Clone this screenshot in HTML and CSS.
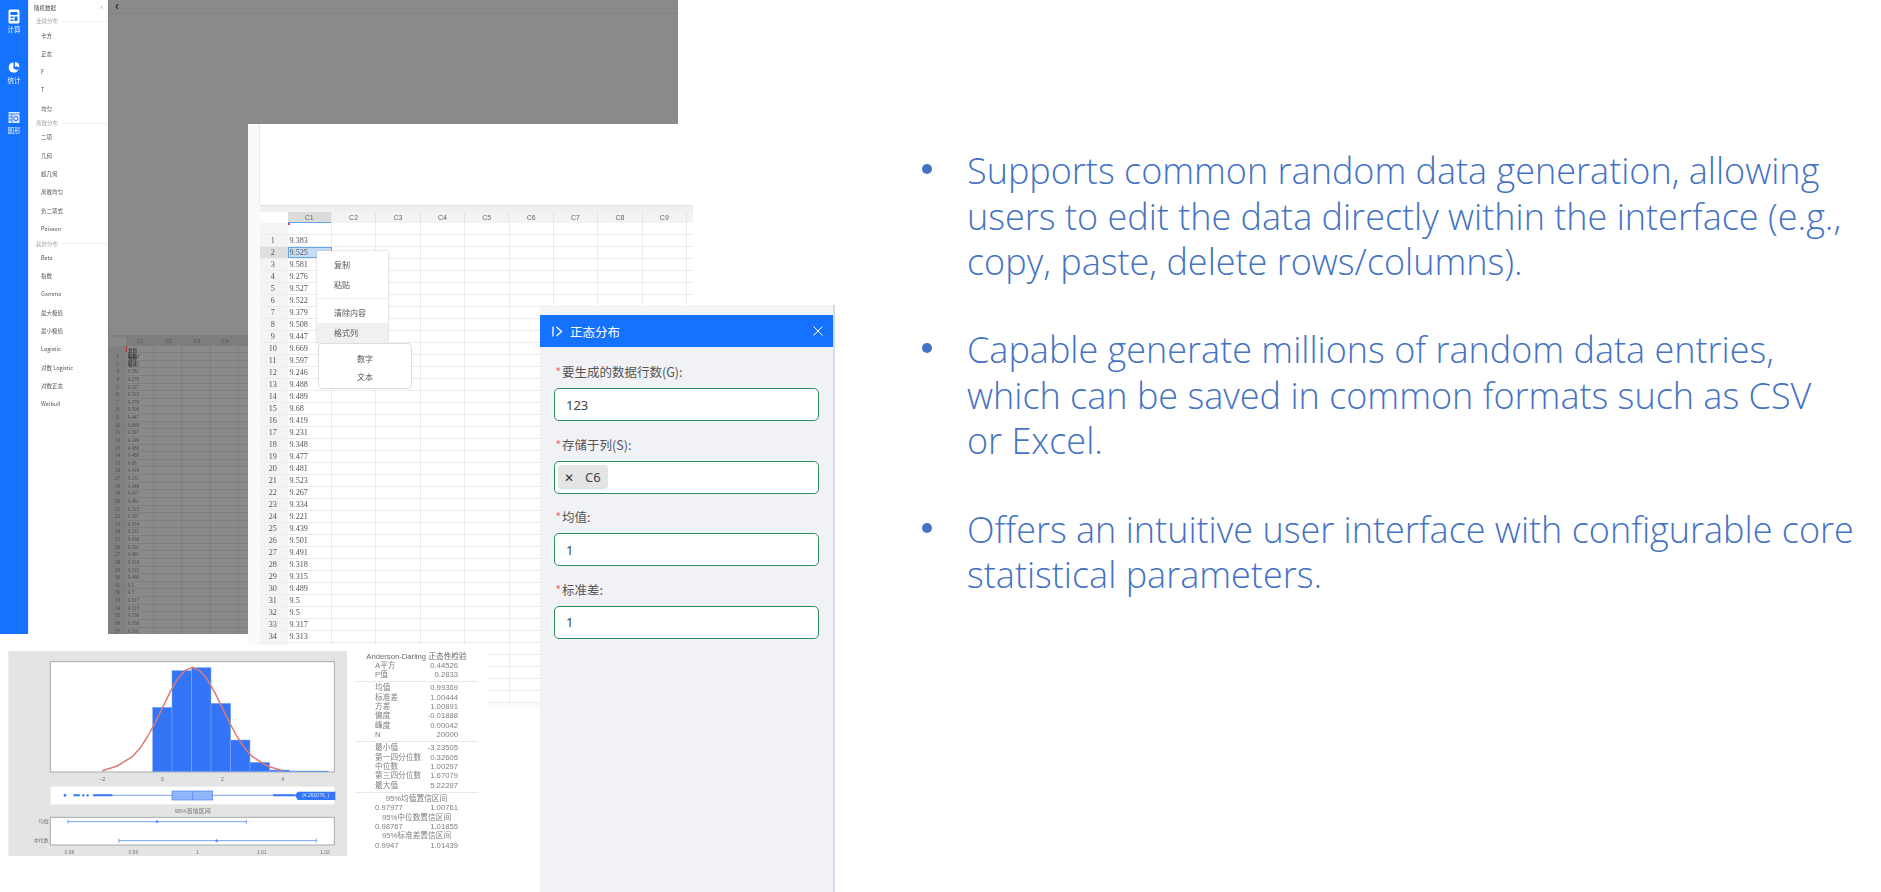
FILE: index.html
```html
<!DOCTYPE html>
<html lang="zh">
<head>
  <meta charset="UTF-8">
  <title>Random data</title>
  <link rel="stylesheet" href="styles.css">
</head>
<body>
<div class="slide">

  <!-- back window: app with the dimmed sheet -->
  <div class="app">
    <div class="rail">
      <div class="rail-item">
        <svg width="12" height="15" viewBox="0 0 12 15"><rect width="11" height="14" x=".5" y=".5" rx="1.5" fill="#fff"/><rect x="2.5" y="3" width="7" height="3" fill="#1472ff"/><rect x="2.5" y="7.5" width="3" height="1.5" fill="#1472ff"/><rect x="6.5" y="7.5" width="3" height="4.5" fill="#1472ff"/><rect x="2.5" y="10.5" width="3" height="1.5" fill="#1472ff"/></svg>
        <span>计算</span>
      </div>
      <div class="rail-item">
        <svg width="12" height="15" viewBox="0 -1.500 12 15"><path d="M5.5 1a5 5 0 1 0 5 6.4H5.500z" fill="#fff"/><path d="M7 .6a5 5 0 0 1 4.400 5.200H7z" fill="#fff"/><circle cx="8.600" cy="6.600" r="1.800" fill="#1472ff"/></svg>
        <span>统计</span>
      </div>
      <div class="rail-item">
        <svg width="12" height="15" viewBox="0 -1.500 12 15"><rect width="11" height="11" x=".5" y=".5" fill="#dce9ff"/><path d="M0 2.500h12M4 2.500v9M.5 5.500H4M.5 8.500H4" stroke="#1472ff" stroke-width=".8" fill="none"/><circle cx="7.800" cy="7" r="2.200" fill="none" stroke="#1472ff"/></svg>
        <span>图形</span>
      </div>
    </div>

    <div class="menu">
      <div class="menu-head"><span>随机数据</span><span class="chev">^</span></div>
      <div class="menu-group">连续分布</div>
      <div class="menu-item">卡方</div>
      <div class="menu-item">正态</div>
      <div class="menu-item">F</div>
      <div class="menu-item">T</div>
      <div class="menu-item">均匀</div>
      <div class="menu-group">离散分布</div>
      <div class="menu-item">二项</div>
      <div class="menu-item">几何</div>
      <div class="menu-item">超几何</div>
      <div class="menu-item">离散均匀</div>
      <div class="menu-item">负二项式</div>
      <div class="menu-item">Poisson</div>
      <div class="menu-group">其他分布</div>
      <div class="menu-item">Beta</div>
      <div class="menu-item">指数</div>
      <div class="menu-item">Gamma</div>
      <div class="menu-item">最大极值</div>
      <div class="menu-item">最小极值</div>
      <div class="menu-item">Logistic</div>
      <div class="menu-item">对数 Logistic</div>
      <div class="menu-item">对数正态</div>
      <div class="menu-item">Weibull</div>
    </div>

    <div class="dim">
      <div class="dim-top"><span class="back">‹</span></div>
      <div class="dim-space"></div>
      <div class="mini-head"><span class="mini-num"></span><span>C1</span><span>C2</span><span>C3</span><span>C4</span></div>
      <div class="mini-row mini-blank"><b></b><span></span></div>
      <div class="mini-row"><b>1</b><span>9.383</span></div>
      <div class="mini-row"><b>2</b><span>9.525</span></div>
      <div class="mini-row"><b>3</b><span>9.581</span></div>
      <div class="mini-row"><b>4</b><span>9.276</span></div>
      <div class="mini-row"><b>5</b><span>9.527</span></div>
      <div class="mini-row"><b>6</b><span>9.522</span></div>
      <div class="mini-row"><b>7</b><span>9.379</span></div>
      <div class="mini-row"><b>8</b><span>9.508</span></div>
      <div class="mini-row"><b>9</b><span>9.447</span></div>
      <div class="mini-row"><b>10</b><span>9.669</span></div>
      <div class="mini-row"><b>11</b><span>9.597</span></div>
      <div class="mini-row"><b>12</b><span>9.246</span></div>
      <div class="mini-row"><b>13</b><span>9.488</span></div>
      <div class="mini-row"><b>14</b><span>9.489</span></div>
      <div class="mini-row"><b>15</b><span>9.68</span></div>
      <div class="mini-row"><b>16</b><span>9.419</span></div>
      <div class="mini-row"><b>17</b><span>9.231</span></div>
      <div class="mini-row"><b>18</b><span>9.348</span></div>
      <div class="mini-row"><b>19</b><span>9.477</span></div>
      <div class="mini-row"><b>20</b><span>9.481</span></div>
      <div class="mini-row"><b>21</b><span>9.523</span></div>
      <div class="mini-row"><b>22</b><span>9.267</span></div>
      <div class="mini-row"><b>23</b><span>9.334</span></div>
      <div class="mini-row"><b>24</b><span>9.221</span></div>
      <div class="mini-row"><b>25</b><span>9.439</span></div>
      <div class="mini-row"><b>26</b><span>9.501</span></div>
      <div class="mini-row"><b>27</b><span>9.491</span></div>
      <div class="mini-row"><b>28</b><span>9.318</span></div>
      <div class="mini-row"><b>29</b><span>9.315</span></div>
      <div class="mini-row"><b>30</b><span>9.489</span></div>
      <div class="mini-row"><b>31</b><span>9.5</span></div>
      <div class="mini-row"><b>32</b><span>9.5</span></div>
      <div class="mini-row"><b>33</b><span>9.317</span></div>
      <div class="mini-row"><b>34</b><span>9.313</span></div>
      <div class="mini-row"><b>35</b><span>9.539</span></div>
      <div class="mini-row"><b>36</b><span>9.358</span></div>
      <div class="mini-row"><b>37</b><span>9.501</span></div>
      <div class="mini-menu">复制<br>粘贴<br>清除<br>格式</div>
    </div>
  </div>

  <!-- spreadsheet window -->
  <div class="sheet">
    <div class="sheet-blank"></div>
    <div class="sheet-band"></div>
    <div class="sheet-head">
      <span class="corner"></span>
      <span class="col col-on">C1</span><span class="col">C2</span><span class="col">C3</span><span class="col">C4</span><span class="col">C5</span><span class="col">C6</span><span class="col">C7</span><span class="col">C8</span><span class="col">C9</span><span class="col"></span>
    </div>
    <div class="row row-blank"><b class="num"></b><span class="val"></span></div>
    <div class="row"><b class="num">1</b><span class="val">9.383</span></div>
    <div class="row row-on"><b class="num">2</b><span class="val">9.525</span></div>
    <div class="row"><b class="num">3</b><span class="val">9.581</span></div>
    <div class="row"><b class="num">4</b><span class="val">9.276</span></div>
    <div class="row"><b class="num">5</b><span class="val">9.527</span></div>
    <div class="row"><b class="num">6</b><span class="val">9.522</span></div>
    <div class="row"><b class="num">7</b><span class="val">9.379</span></div>
    <div class="row"><b class="num">8</b><span class="val">9.508</span></div>
    <div class="row"><b class="num">9</b><span class="val">9.447</span></div>
    <div class="row"><b class="num">10</b><span class="val">9.669</span></div>
    <div class="row"><b class="num">11</b><span class="val">9.597</span></div>
    <div class="row"><b class="num">12</b><span class="val">9.246</span></div>
    <div class="row"><b class="num">13</b><span class="val">9.488</span></div>
    <div class="row"><b class="num">14</b><span class="val">9.489</span></div>
    <div class="row"><b class="num">15</b><span class="val">9.68</span></div>
    <div class="row"><b class="num">16</b><span class="val">9.419</span></div>
    <div class="row"><b class="num">17</b><span class="val">9.231</span></div>
    <div class="row"><b class="num">18</b><span class="val">9.348</span></div>
    <div class="row"><b class="num">19</b><span class="val">9.477</span></div>
    <div class="row"><b class="num">20</b><span class="val">9.481</span></div>
    <div class="row"><b class="num">21</b><span class="val">9.523</span></div>
    <div class="row"><b class="num">22</b><span class="val">9.267</span></div>
    <div class="row"><b class="num">23</b><span class="val">9.334</span></div>
    <div class="row"><b class="num">24</b><span class="val">9.221</span></div>
    <div class="row"><b class="num">25</b><span class="val">9.439</span></div>
    <div class="row"><b class="num">26</b><span class="val">9.501</span></div>
    <div class="row"><b class="num">27</b><span class="val">9.491</span></div>
    <div class="row"><b class="num">28</b><span class="val">9.318</span></div>
    <div class="row"><b class="num">29</b><span class="val">9.315</span></div>
    <div class="row"><b class="num">30</b><span class="val">9.489</span></div>
    <div class="row"><b class="num">31</b><span class="val">9.5</span></div>
    <div class="row"><b class="num">32</b><span class="val">9.5</span></div>
    <div class="row"><b class="num">33</b><span class="val">9.317</span></div>
    <div class="row"><b class="num">34</b><span class="val">9.313</span></div>
    <div class="row"><b class="num"></b><span class="val"></span></div>
    <div class="row"><b class="num"></b><span class="val"></span></div>
    <div class="row"><b class="num"></b><span class="val"></span></div>
    <div class="row"><b class="num"></b><span class="val"></span></div>
    <div class="row"><b class="num"></b><span class="val"></span></div>

    <div class="ctx">
      <div class="ctx-item">复制</div>
      <div class="ctx-item">粘贴</div>
      <div class="ctx-line"></div>
      <div class="ctx-item">清除内容</div>
      <div class="ctx-item ctx-on">格式列</div>
    </div>
    <div class="ctx-sub">
      <div>数字</div>
      <div>文本</div>
    </div>
  </div>

  <!-- report picture: chart and stats -->
  <div class="report">
    <svg class="chart" width="355" height="247" viewBox="0 15 1065 741" font-family="'Liberation Sans','Noto Sans CJK SC',sans-serif">
      <rect x="25" y="33" width="1016" height="615" fill="#e4e4e4"/>
      <rect x="151" y="65" width="852" height="331" fill="#fff" stroke="#a9a9a9" stroke-width="3"/>
      <g fill="#3375f6" stroke="#7ea6f8" stroke-width="1.5">
        <rect x="458" y="202" width="58" height="193"/>
        <rect x="516" y="92" width="59" height="303"/>
        <rect x="575" y="83" width="58" height="312"/>
        <rect x="633" y="190" width="59" height="205"/>
        <rect x="692" y="300" width="58" height="95"/>
        <rect x="750" y="367" width="59" height="28"/>
        <rect x="809" y="390" width="59" height="5"/>
        <rect x="868" y="393" width="117" height="2"/>
      </g>
      <polyline fill="none" stroke="#dd7a70" stroke-width="4.500" stroke-linejoin="round" points="307,392 352,378 397,350 419.500,325 442,291 464.500,250 487,204 509.500,158 532,118 554.500,92 577,82 599.500,92 622,118 644.500,158 667,204 689.500,250 712,291 734.500,325 757,350 802,378 847,392"/>
      <g fill="#666" font-size="15" text-anchor="middle">
        <text x="307" y="422">−2</text><text x="487" y="422">0</text><text x="667" y="422">2</text><text x="848" y="422">4</text>
      </g>
      <rect x="152" y="440" width="850" height="53" fill="#fff"/>
      <path d="M337 466H516M638 466H818" stroke="#5d8ff5" stroke-width="2.500"/>
      <rect x="516" y="453" width="122" height="27" fill="#90b5fa" stroke="#4b83f3" stroke-width="2"/>
      <path d="M578 453v27" stroke="#4b83f3" stroke-width="2"/>
      <g fill="#3375f6">
        <circle cx="195" cy="466" r="4"/><rect x="220" y="463" width="20" height="6" rx="3"/><circle cx="250" cy="466" r="3.500"/><circle cx="263" cy="466" r="3.500"/>
        <rect x="278" y="463" width="60" height="6" rx="3"/><rect x="818" y="463" width="68" height="6" rx="3"/>
      </g>
      <path d="M885 466l8-11h113v25H893z" fill="#3375f6"/>
      <text x="947" y="472" fill="#dbe7ff" font-size="15" text-anchor="middle">(4.261076, )</text>
      <text x="578" y="520" fill="#777" font-size="18" text-anchor="middle">95%置信区间</text>
      <rect x="151" y="532" width="852" height="83" fill="#fff" stroke="#a9a9a9" stroke-width="3"/>
      <g stroke="#5d8ff5" stroke-width="2.500" fill="#3375f6">
        <path d="M204 545H739M204 539v12M739 539v12M357 602H949M357 596v12M949 596v12"/>
        <circle cx="471" cy="545" r="3"/><circle cx="650" cy="602" r="3"/>
      </g>
      <g fill="#777" font-size="15">
        <text x="146" y="550" text-anchor="end">均值</text>
        <text x="146" y="607" text-anchor="end">中位数</text>
      </g>
      <g fill="#777" font-size="15" text-anchor="middle">
        <text x="208" y="641">0.98</text><text x="400" y="641">0.99</text><text x="592" y="641">1</text><text x="785" y="641">1.01</text><text x="975" y="641">1.02</text>
      </g>
    </svg>

    <div class="stats">
      <div class="st-title">Anderson-Darling 正态性检验</div>
      <div class="st-row"><span>A平方</span><span>0.44526</span></div>
      <div class="st-row"><span>P值</span><span>0.2833</span></div>
      <div class="st-line"></div>
      <div class="st-row"><span>均值</span><span>0.99369</span></div>
      <div class="st-row"><span>标准差</span><span>1.00444</span></div>
      <div class="st-row"><span>方差</span><span>1.00891</span></div>
      <div class="st-row"><span>偏度</span><span>-0.01888</span></div>
      <div class="st-row"><span>峰度</span><span>0.00042</span></div>
      <div class="st-row"><span>N</span><span>20000</span></div>
      <div class="st-line"></div>
      <div class="st-row"><span>最小值</span><span>-3.23505</span></div>
      <div class="st-row"><span>第一四分位数</span><span>0.32605</span></div>
      <div class="st-row"><span>中位数</span><span>1.00297</span></div>
      <div class="st-row"><span>第三四分位数</span><span>1.67079</span></div>
      <div class="st-row"><span>最大值</span><span>5.22297</span></div>
      <div class="st-line"></div>
      <div class="st-mid">95%均值置信区间</div>
      <div class="st-row"><span>0.97977</span><span>1.00761</span></div>
      <div class="st-mid">95%中位数置信区间</div>
      <div class="st-row"><span>0.98767</span><span>1.01855</span></div>
      <div class="st-mid">95%标准差置信区间</div>
      <div class="st-row"><span>0.9947</span><span>1.01439</span></div>
    </div>
  </div>

  <!-- dialog -->
  <div class="dialog">
    <div class="dlg-strip"></div>
    <div class="dlg-head">
      <svg width="11" height="11" viewBox="0 0 11 11" fill="none" stroke="#fff" stroke-width="1.300"><path d="M1 .5v10M4.500 1l5 4.500-5 4.500"/></svg>
      <span class="dlg-title">正态分布</span>
      <svg class="dlg-x" width="10" height="10" viewBox="0 0 10 10" stroke="#fff" stroke-width="1"><path d="M.5.500l9 9M9.500.500l-9 9"/></svg>
    </div>
    <div class="dlg-body">
      <div class="field">
        <label><i>*</i>要生成的数据行数(G):</label>
        <div class="input">123</div>
      </div>
      <div class="field">
        <label><i>*</i>存储于列(S):</label>
        <div class="input"><span class="chip"><span class="chip-x">✕</span><span class="chip-txt">C6</span></span></div>
      </div>
      <div class="field">
        <label><i>*</i>均值:</label>
        <div class="input">1</div>
      </div>
      <div class="field">
        <label><i>*</i>标准差:</label>
        <div class="input">1</div>
      </div>
    </div>
  </div>

  <ul class="notes">
    <li><span>Supports common random data generation, allowing<br>users to edit the data directly within the interface (e.g.,<br>copy, paste, delete rows/columns).</span></li>
    <li><span>Capable generate millions of random data entries,<br>which can be saved in common formats such as CSV<br>or Excel.</span></li>
    <li><span>Offers an intuitive user interface with configurable core<br>statistical parameters.</span></li>
  </ul>
</div>
</body>
</html>
```

FILE: styles.css
```css
html, body {
  margin: 0;
  background: #fff;
}

.slide {
  position: relative;
  width: 1881px;
  height: 892px;
  overflow: hidden;
  font-family: "Noto Sans", "Noto Sans CJK SC", sans-serif;
}

/* back window */
.app {
  position: absolute;
  left: 0;
  top: 0;
  width: 678px;
  height: 634px;
  display: flex;
  filter: blur(0.4px);
}

.rail {
  width: 28px;
  background: #1472ff;
  color: #e8f0ff;
  font-size: 6.500px;
  font-family: "Noto Sans CJK SC", sans-serif;
  text-align: center;
  padding-top: 9px;
  box-sizing: border-box;
}

.rail-item {
  height: 50.500px;
  display: flex;
  flex-direction: column;
  align-items: center;
  gap: 1px;
}

.rail-item span {
  line-height: 9px;
}

.menu {
  width: 80px;
  background: #fff;
  border-left: 1px solid #eef2f8;
  box-sizing: border-box;
  font-family: "Noto Sans CJK SC", sans-serif;
  font-size: 5.500px;
  color: #555;
}

.menu-head {
  height: 16px;
  display: flex;
  justify-content: space-between;
  align-items: center;
  padding: 0 5px;
  color: #444;
}

.chev {
  color: #888;
}

.menu-group {
  height: 10.500px;
  display: flex;
  align-items: center;
  gap: 3px;
  padding-left: 7px;
  color: #a5a5a5;
}

.menu-group::after {
  content: "";
  flex: 1;
  height: 1px;
  background: #f3f3f3;
}

.menu-item {
  height: 18.300px;
  line-height: 18.300px;
  padding-left: 12px;
}

.dim {
  position: relative;
  flex: 1;
  background: #8a8a8a;
  border-left: 1px solid #7e7e7e;
  display: flex;
  flex-direction: column;
  font-family: "Liberation Serif", serif;
  font-size: 5.200px;
  color: #4c4c4c;
  overflow: hidden;
}

.dim-top {
  height: 13px;
  border-bottom: 1px solid #828282;
  flex: none;
  line-height: 13px;
}

.back {
  display: inline-block;
  margin-left: 6px;
  font-size: 12px;
  font-weight: bold;
  line-height: 12px;
  color: #333;
  font-family: "Liberation Sans", sans-serif;
}

.dim-space {
  height: 321px;
  flex: none;
  border-bottom: 2px solid #7f7f7f;
}

.mini-head {
  height: 9px;
  flex: none;
  display: flex;
  background: #7d7d7d;
  line-height: 9px;
  text-align: center;
}

.mini-head .mini-num {
  width: 17px;
  background: #888;
}

.mini-head span {
  width: 28.400px;
  flex: none;
}

.mini-row {
  height: 7.640px;
  flex: none;
  display: flex;
  line-height: 7.640px;
  box-sizing: border-box;
  border-bottom: 1px solid #7f7f7f;
}

.mini-row b {
  width: 17px;
  flex: none;
  font-weight: normal;
  text-align: center;
  background: #808080;
}

.mini-row span {
  width: 28.400px;
  flex: none;
  padding-left: 1.500px;
  box-sizing: border-box;
  border-right: 1px solid #7f7f7f;
}

.mini-row::after {
  content: "";
  flex: 1;
  background: repeating-linear-gradient(90deg, transparent 0 27.400px, #7f7f7f 27.400px 28.400px);
}

.mini-blank {
  height: 7px;
}

.mini-blank span {
  border-left: 1px solid #a33;
}

.mini-menu {
  position: absolute;
  left: 19px;
  top: 348px;
  font-family: "Noto Sans CJK SC", sans-serif;
  font-size: 4.500px;
  line-height: 4.600px;
  color: #222;
}

/* sheet window */
.sheet {
  position: absolute;
  left: 248px;
  top: 124px;
  width: 445px;
  height: 583px;
  overflow: hidden;
  background: #fafafa;
  filter: blur(0.35px);
  font-family: "Liberation Serif", serif;
  font-size: 8.200px;
  color: #555;
}

.sheet-blank {
  height: 81px;
  margin-left: 12px;
  background: #fff;
  box-shadow: -1px 0 0 #e8e8e8;
}

.sheet-band {
  height: 7px;
  margin-left: 12px;
  background: #f0f0f0;
  border-top: 1px solid #e4e4e4;
  box-sizing: border-box;
}

.sheet-head {
  height: 11px;
  display: flex;
  margin-left: 12px;
  line-height: 11px;
  font-family: "Liberation Sans", sans-serif;
  font-size: 7px;
  text-align: center;
  color: #666;
}

.corner {
  width: 27.500px;
  flex: none;
  background: #fff;
}

.col {
  width: 44.400px;
  flex: none;
  box-sizing: border-box;
  background: #f3f3f2;
  border-right: 1px solid #e6e6e6;
}

.col-on {
  background: #dcdcda;
  box-shadow: inset 0 -1px 0 #64a6ee;
}

.row {
  display: flex;
  height: 12px;
  margin-left: 12px;
  background: #fff;
  line-height: 12px;
  box-sizing: border-box;
  border-bottom: 1px solid #ececec;
}

.row::after {
  content: "";
  flex: 1;
  background: repeating-linear-gradient(90deg, transparent 0 43.400px, #ececec 43.400px 44.400px);
}

.num {
  width: 27.500px;
  flex: none;
  background: #f4f4f4;
  font-weight: normal;
  text-align: center;
  padding-right: 2px;
  box-sizing: border-box;
}

.val {
  width: 44.400px;
  flex: none;
  box-sizing: border-box;
  padding-left: 2px;
  border-right: 1px solid #ececec;
}

.row-blank .val {
  background: linear-gradient(#d9534f, #d9534f) 0 0 / 2px 2px no-repeat;
}

.row-on .num {
  background: #dedede;
}

.row-on .val {
  background: #c6ddf6;
  border: 1px solid #64a6ee;
  line-height: 10px;
  padding-left: 1px;
}

/* context menus */
.ctx {
  position: absolute;
  left: 69px;
  top: 127px;
  width: 71px;
  height: 92px;
  padding-top: 4px;
  box-sizing: border-box;
  background: #fff;
  box-shadow: 0 0 2px #bbb;
  font-family: "Noto Sans CJK SC", sans-serif;
  font-size: 8px;
  color: #555;
}

.ctx-item {
  height: 20px;
  line-height: 20px;
  padding-left: 17px;
}

.ctx-line {
  height: 1px;
  margin: 3px 0 4px;
  background: #eee;
}

.ctx-on {
  background: #f0f0f0;
}

.ctx-sub {
  position: absolute;
  left: 70px;
  top: 219px;
  width: 94px;
  height: 46px;
  padding-top: 6px;
  box-sizing: border-box;
  background: #fff;
  border: 1px solid #ddd;
  border-radius: 4px;
  font-family: "Noto Sans CJK SC", sans-serif;
  font-size: 8px;
  line-height: 18px;
  color: #555;
  text-align: center;
}

/* report picture */
.report {
  position: absolute;
  left: 0;
  top: 645px;
  width: 488px;
  height: 247px;
  background: #fff;
  display: flex;
  filter: blur(0.5px);
}

.chart {
  flex: none;
}

.stats {
  width: 123px;
  padding-top: 6.500px;
  font-family: "Liberation Sans", "Noto Sans CJK SC", sans-serif;
  font-size: 7.700px;
  color: #808080;
}

.st-title {
  height: 9.330px;
  line-height: 9.330px;
  text-align: center;
  white-space: nowrap;
  color: #6a6a6a;
}

.st-row {
  height: 9.330px;
  line-height: 9.330px;
  display: flex;
  justify-content: space-between;
  padding: 0 20px;
  white-space: nowrap;
}

.st-mid {
  height: 9.330px;
  line-height: 9.330px;
  text-align: center;
  white-space: nowrap;
}

.st-line {
  height: 1px;
  margin: 1.500px 0;
  background: #e8e8e8;
}

/* dialog */
.dialog {
  position: absolute;
  left: 540px;
  top: 305px;
  width: 293px;
  height: 587px;
  background: #f0f2f6;
  border-right: 2px solid #d3dce6;
  font-family: "Noto Sans", "Noto Sans CJK SC", sans-serif;
}

.dlg-strip {
  height: 10px;
  background: #f5f5f5;
}

.dlg-head {
  height: 32px;
  display: flex;
  align-items: center;
  padding: 0 10px 0 12px;
  background: #1572ff;
  color: #fff;
}

.dlg-title {
  margin-left: 7px;
  flex: 1;
  font-family: "Noto Sans CJK SC", sans-serif;
  font-size: 12.500px;
}

.dlg-body {
  padding: 17px 14px 0;
}

.field {
  height: 72.500px;
}

.field label {
  display: block;
  height: 24px;
  line-height: 15px;
  font-family: "Noto Sans CJK SC", sans-serif;
  font-size: 12.500px;
  color: #555;
  white-space: nowrap;
}

.field label i {
  display: inline-block;
  width: 8px;
  font-style: normal;
  color: #e66;
  font-size: 12px;
  text-align: right;
  padding-right: 1px;
  box-sizing: border-box;
}

.input {
  height: 33px;
  box-sizing: border-box;
  display: flex;
  align-items: center;
  padding-left: 11px;
  background: #fff;
  border: 1px solid #2e8b62;
  border-radius: 5px;
  font-size: 13px;
  color: #444;
}

.chip {
  margin-left: -8px;
  width: 50px;
  height: 24px;
  display: flex;
  align-items: center;
  background: #e4e4e4;
  border-radius: 4px;
  font-size: 13px;
}

.chip-x {
  width: 22px;
  text-align: center;
  font-size: 12px;
  color: #333;
}

.chip-txt {
  padding-left: 5px;
}

/* bullet text */
.notes {
  list-style: none;
  margin: 0;
  padding: 148px 0 0 922px;
  font-family: "Open Sans", "Noto Sans", sans-serif;
  font-weight: 300;
  font-size: 36px;
  line-height: 45.600px;
  color: #4472c4;
  white-space: nowrap;
}

.notes li {
  display: flex;
  margin-bottom: 42.500px;
}

.notes li::before {
  content: "";
  flex: none;
  width: 10px;
  height: 10px;
  margin: 16px 35px 0 0;
  border-radius: 50%;
  background: #4472c4;
}
```
